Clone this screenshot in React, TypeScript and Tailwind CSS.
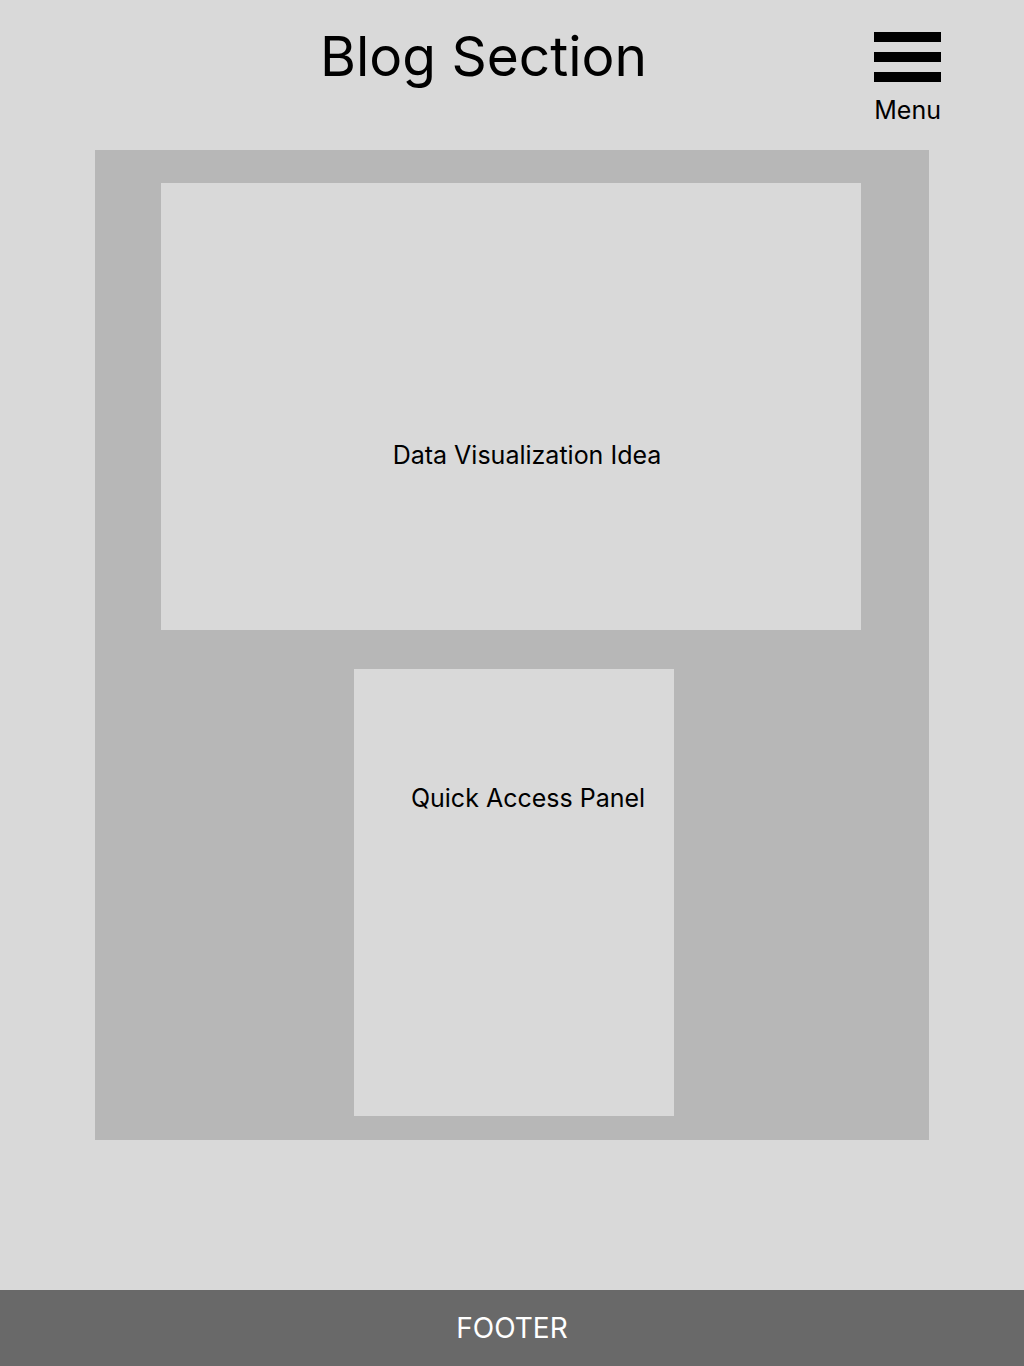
function MenuIcon() {
  return (
    <svg className="h-[50px] w-[67px]" viewBox="0 0 67 50" fill="currentColor" aria-hidden="true">
      <rect width="67" height="10" />
      <rect y="20" width="67" height="10" />
      <rect y="40" width="67" height="10" />
    </svg>
  );
}

export default function App() {
  return (
    <div className="flex min-h-screen flex-col bg-[#d9d9d9] font-['Inter',sans-serif] text-black">
      <header className="grid grid-cols-[1fr_auto_1fr] items-start pt-8 pr-[83px] pb-6 pl-[26px]">
        <h1 className="col-start-2 text-[55px] leading-12">Blog Section</h1>
        <button type="button" className="flex flex-col items-end justify-self-end text-[25px] leading-8">
          <MenuIcon />
          <span className="mt-3">Menu</span>
        </button>
      </header>

      <main className="mx-[95px] flex flex-col items-center gap-[39px] bg-[#b7b7b7] pt-[33px] pr-[68px] pb-6 pl-[66px]">
        <section className="flex h-[447px] w-full items-center justify-center bg-[#d9d9d9] pt-24 pl-8">
          <h2 className="text-[25px] leading-8">Data Visualization Idea</h2>
        </section>
        <section className="ml-1.5 flex h-[447px] w-80 justify-center bg-[#d9d9d9] pt-[113px] pl-7">
          <h2 className="text-[25px] leading-8">Quick Access Panel</h2>
        </section>
      </main>

      <footer className="mt-auto bg-[#696969] py-5 text-center text-[28px] leading-9 text-white">
        FOOTER
      </footer>
    </div>
  );
}
